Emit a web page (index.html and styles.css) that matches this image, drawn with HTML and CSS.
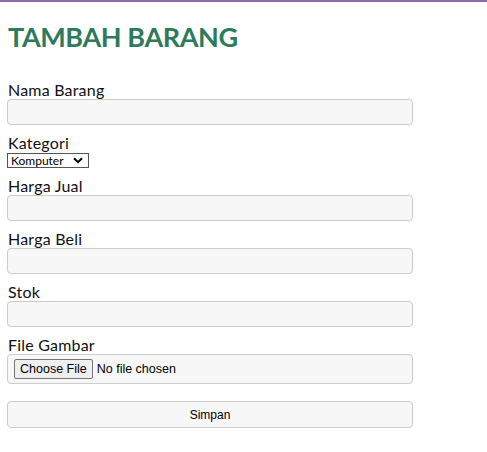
FILE: index.html
```html
<!DOCTYPE html>
<html>
<head>
<meta charset="utf-8">
<link rel="stylesheet" href="styles.css">
</head>
<body>
<div class="page">
  <h1 class="title">TAMBAH BARANG</h1>
  <form class="form">
    <label class="label">Nama Barang</label>
    <input class="field" type="text">
    <label class="label">Kategori</label>
    <span class="select-wrap">
      <select class="select"><option>Komputer</option></select>
      <svg class="chev" width="10" height="7" viewBox="0 0 10 7"><path d="M1 1.2 L5 5.2 L9 1.2" fill="none" stroke="#000" stroke-width="2"/></svg>
    </span>
    <label class="label">Harga Jual</label>
    <input class="field" type="text">
    <label class="label">Harga Beli</label>
    <input class="field" type="text">
    <label class="label">Stok</label>
    <input class="field" type="text">
    <label class="label">File Gambar</label>
    <div class="filebox"><span class="filebtn">Choose File</span><span class="filetext">No file chosen</span></div>
    <button class="submit" type="button">Simpan</button>
  </form>
</div>
</body>
</html>
```
FILE: styles.css
```css
html, body { margin: 0; padding: 0; background: #fff; }
body { border-top: 2px solid #8c6cb0; }
.page { padding: 0 7px; font-family: "Lato", "DejaVu Sans", sans-serif; color: #111; }
.title { margin: 0; padding-top: 18px; padding-left: 1px; font-size: 27px; line-height: 34px; font-weight: bold; color: #2e7a5c; letter-spacing: -0.4px; }
.form { display: flex; flex-direction: column; align-items: flex-start; width: 406px; padding-top: 28px; }
.label { font-size: 16px; line-height: 16px; padding-left: 1px; letter-spacing: 0.2px; }
.field { box-sizing: border-box; width: 406px; height: 26px; margin: 1px 0 10px; border: 1px solid #cccccc; border-radius: 4px; background: #f7f7f7; }
.select-wrap { position: relative; display: block; margin: 2px 0 10px; width: 82px; height: 15px; }
.select { -webkit-appearance: none; appearance: none; box-sizing: border-box; display: block; width: 82px; height: 15px; margin: 0; padding: 0 0 0 3px; font-family: "Lato", sans-serif; font-size: 12px; line-height: 13px; border: 1px solid #555; border-radius: 0; background: #fff; color: #000; }
.chev { position: absolute; right: 6px; top: 4px; pointer-events: none; }
.filebox { box-sizing: border-box; width: 406px; height: 30px; margin: 1px 0 17px; border: 1px solid #cccccc; border-radius: 4px; background: #f7f7f7; display: flex; align-items: center; padding-left: 6px; font-family: "Liberation Sans", Arial, sans-serif; font-size: 12.5px; }
.filebtn { box-sizing: border-box; height: 20px; line-height: 18px; padding: 0 5px; border: 1px solid #767676; border-radius: 2px; background: #efefef; color: #000; }
.filetext { margin-left: 4px; color: #000; }
.submit { box-sizing: border-box; width: 406px; height: 27px; border: 1px solid #cccccc; border-radius: 4px; background: #f7f7f7; font-family: "Liberation Sans", Arial, sans-serif; font-size: 12px; color: #000; padding: 0; }
```
